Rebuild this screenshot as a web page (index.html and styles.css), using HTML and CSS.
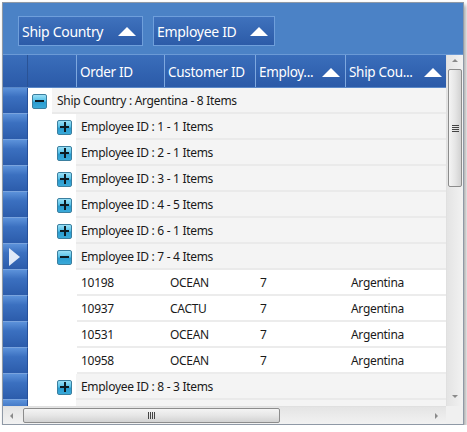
FILE: index.html
```html
<!DOCTYPE html>
<html>
<head>
<meta charset="utf-8">
<link rel="stylesheet" href="styles.css">
</head>
<body>
<div class="window">
  <div class="group-area">
    <div class="group-btn btn1"><span>Ship Country</span><i class="tri"></i></div>
    <div class="group-btn btn2"><span>Employee ID</span><i class="tri"></i></div>
  </div>
  <div class="grid">
    <div class="main">
      <div class="header">
        <div class="hc rhh"></div>
        <div class="hc indh"></div>
        <div class="hc c1">Order ID</div>
        <div class="hc c2">Customer ID</div>
        <div class="hc c3"><span>Employ...</span><i class="tri"></i></div>
        <div class="hc c4"><span>Ship Cou...</span><i class="tri"></i></div>
      </div>
      <div class="body">
        <div class="row"><div class="rh"></div><div class="ind l1"><i class="exp minus"></i></div><div class="grp">Ship Country : Argentina - 8 Items</div></div>
        <div class="row"><div class="rh"></div><div class="ind l2"><i class="exp plus"></i></div><div class="grp">Employee ID : 1 - 1 Items</div></div>
        <div class="row"><div class="rh"></div><div class="ind l2"><i class="exp plus"></i></div><div class="grp">Employee ID : 2 - 1 Items</div></div>
        <div class="row"><div class="rh"></div><div class="ind l2"><i class="exp plus"></i></div><div class="grp">Employee ID : 3 - 1 Items</div></div>
        <div class="row"><div class="rh"></div><div class="ind l2"><i class="exp plus"></i></div><div class="grp">Employee ID : 4 - 5 Items</div></div>
        <div class="row"><div class="rh"></div><div class="ind l2"><i class="exp plus"></i></div><div class="grp">Employee ID : 6 - 1 Items</div></div>
        <div class="row"><div class="rh current"><i class="cur"></i></div><div class="ind l2"><i class="exp minus"></i></div><div class="grp">Employee ID : 7 - 4 Items</div></div>
        <div class="row data"><div class="rh"></div><div class="ind l3"></div><div class="dc c1">10198</div><div class="dc c2">OCEAN</div><div class="dc c3">7</div><div class="dc c4">Argentina</div></div>
        <div class="row data"><div class="rh"></div><div class="ind l3"></div><div class="dc c1">10937</div><div class="dc c2">CACTU</div><div class="dc c3">7</div><div class="dc c4">Argentina</div></div>
        <div class="row data"><div class="rh"></div><div class="ind l3"></div><div class="dc c1">10531</div><div class="dc c2">OCEAN</div><div class="dc c3">7</div><div class="dc c4">Argentina</div></div>
        <div class="row data"><div class="rh"></div><div class="ind l3"></div><div class="dc c1">10958</div><div class="dc c2">OCEAN</div><div class="dc c3">7</div><div class="dc c4">Argentina</div></div>
        <div class="row"><div class="rh"></div><div class="ind l2"><i class="exp plus"></i></div><div class="grp">Employee ID : 8 - 3 Items</div></div>
        <div class="row"><div class="rh"></div><div class="ind l2"><i class="exp plus"></i></div><div class="grp"></div></div>
      </div>
    </div>
    <div class="vscroll">
      <div class="arr up"></div>
      <div class="vthumb"><i class="grip"></i></div>
      <div class="vtrack"></div>
      <div class="arr down"></div>
    </div>
  </div>
  <div class="hbar">
    <div class="hscroll">
      <div class="arr left"></div>
      <div class="hthumb"><i class="hgrip"></i></div>
      <div class="htrack"></div>
      <div class="arr right"></div>
    </div>
    <div class="corner"></div>
  </div>
</div>
</body>
</html>
```

FILE: styles.css
```css
* { box-sizing: border-box; }
html, body { margin: 0; padding: 0; background: #ffffff; }
body { font-family: "Noto Sans", "Open Sans", sans-serif; letter-spacing: -0.3px; }

.window {
  margin: 2px 0 0 2px;
  width: 462px;
  height: 423px;
  border: 1px solid #8f99a6;
  box-shadow: 2px 3px 4px rgba(0,0,0,0.35);
  display: flex;
  flex-direction: column;
  overflow: hidden;
  background: #fff;
}

.group-area {
  height: 52px;
  background: #4b82c6;
  padding: 13px 15px 0 15px;
  display: flex;
  gap: 10px;
  border-bottom: 1px solid #6b9ad6;
}
.group-btn {
  height: 30px;
  border: 1px solid #6f9fdb;
  background: linear-gradient(#3f72bd, #2c5ba8);
  color: #fff;
  font-size: 14px;
  display: flex;
  align-items: center;
  justify-content: space-between;
  padding: 0 6px 0 3px;
}
.btn1 { width: 125px; }
.btn2 { width: 122px; }
.tri {
  display: block;
  width: 0; height: 0;
  border-left: 9px solid transparent;
  border-right: 9px solid transparent;
  border-bottom: 9px solid #ffffff;
  flex: none;
}

.grid { display: flex; height: 351px; }
.main { width: 443px; display: flex; flex-direction: column; }

.header {
  height: 33px;
  display: flex;
  background: linear-gradient(#3a6ebb, #2b5aa8);
  border-bottom: 1px solid #5a88c8;
}
.hc {
  border-right: 1px solid #7ea8df;
  color: #fff;
  font-size: 13.5px;
  display: flex;
  align-items: center;
  justify-content: space-between;
  padding: 2px 5px 0 3px;
  white-space: nowrap;
  overflow: hidden;
  flex: none;
}
.rhh { width: 25px; border-right: 1px solid #2a5396; }
.indh { width: 49px; }
.c1 { width: 88px; }
.c2 { width: 91px; }
.c3 { width: 90px; }
.c4 { width: 100px; border-right: none; padding-right: 4px; }

.body { flex: 1; overflow: hidden; }
.row { height: 26px; display: flex; }
.rh {
  width: 25px;
  flex: none;
  background: linear-gradient(#5c92da 0%, #3b70c0 35%, #2c5cab 100%);
  border-right: 1px solid #26509a;
  border-bottom: 1px solid #7aa4de;
}
.rh.current { display: flex; align-items: center; padding-left: 6px; }
.cur {
  display: block;
  width: 0; height: 0;
  border-top: 9px solid transparent;
  border-bottom: 9px solid transparent;
  border-left: 11px solid #dfe9f8;
}
.ind { flex: none; background: #fff; display: flex; align-items: center; justify-content: flex-end; }
.ind.l1 { width: 24px; padding-right: 5px; }
.ind.l2 { width: 48px; padding-right: 4px; }
.ind.l3 { width: 49px; }
.grp {
  flex: 1;
  background: #f4f4f4;
  border-bottom: 2px solid #eaeaea;
  font-size: 12px;
  color: #1a1a1a;
  display: flex;
  align-items: center;
  padding-left: 5px;
}
.dc {
  background: #fff;
  border-bottom: 2px solid #ececec;
  font-size: 12px;
  color: #1a1a1a;
  display: flex;
  align-items: center;
  padding-left: 4px;
  flex: none;
}
.dc.c2, .dc.c4 { padding-left: 5px; }

.exp {
  display: block;
  position: relative;
  width: 15px; height: 15px;
  border: 1px solid #3b7f9f;
  border-radius: 2px;
  background: linear-gradient(#9ae0f6 0%, #55c0e8 45%, #2a9cd0 55%, #3aa9d8 100%);
}
.exp::before {
  content: "";
  position: absolute;
  left: 2px; top: 5px;
  width: 9px; height: 2px;
  background: #0d1a22;
}
.exp.plus::after {
  content: "";
  position: absolute;
  left: 5.5px; top: 1px;
  width: 2px; height: 10px;
  background: #0d1a22;
}

.vscroll {
  width: 17px;
  flex: none;
  background: linear-gradient(to right, #e4e4e4, #f2f2f2);
  border-left: 1px solid #e0e0e0;
  display: flex;
  flex-direction: column;
  align-items: center;
}
.arr { width: 0; height: 0; flex: none; }
.arr.up { margin-top: 4px; border-left: 3px solid transparent; border-right: 3px solid transparent; border-bottom: 3px solid #8a8a8a; margin-bottom: 7px; }
.arr.down { margin-bottom: 8px; border-left: 3px solid transparent; border-right: 3px solid transparent; border-top: 3px solid #8a8a8a; }
.vthumb {
  width: 14px;
  height: 118px;
  border: 1px solid #8c8c8c;
  border-radius: 2px;
  background: linear-gradient(to right, #f4f4f4, #e6e6e6 50%, #d2d2d2);
  display: flex; align-items: center; justify-content: center;
  flex: none;
}
.grip { display: block; width: 7px; height: 7px; background: repeating-linear-gradient(#444 0 1px, transparent 1px 2px); }
.vtrack { flex: 1; }

.hbar { height: 18px; display: flex; }
.hscroll {
  width: 443px;
  background: linear-gradient(#e4e4e4, #f2f2f2);
  border-top: 1px solid #e0e0e0;
  display: flex;
  align-items: center;
}
.arr.left { margin-left: 7px; margin-right: 10px; border-top: 3px solid transparent; border-bottom: 3px solid transparent; border-right: 3px solid #8a8a8a; }
.arr.right { margin-right: 8px; border-top: 3px solid transparent; border-bottom: 3px solid transparent; border-left: 3px solid #8a8a8a; }
.hthumb {
  width: 257px; height: 15px;
  border: 1px solid #8c8c8c;
  border-radius: 2px;
  background: linear-gradient(#f4f4f4, #e6e6e6 50%, #d2d2d2);
  display: flex; align-items: center; justify-content: center;
  flex: none;
}
.hgrip { display: block; width: 7px; height: 7px; background: repeating-linear-gradient(to right, #444 0 1px, transparent 1px 2px); }
.htrack { flex: 1; }
.corner { flex: 1; background: #f0f0f0; }
```
